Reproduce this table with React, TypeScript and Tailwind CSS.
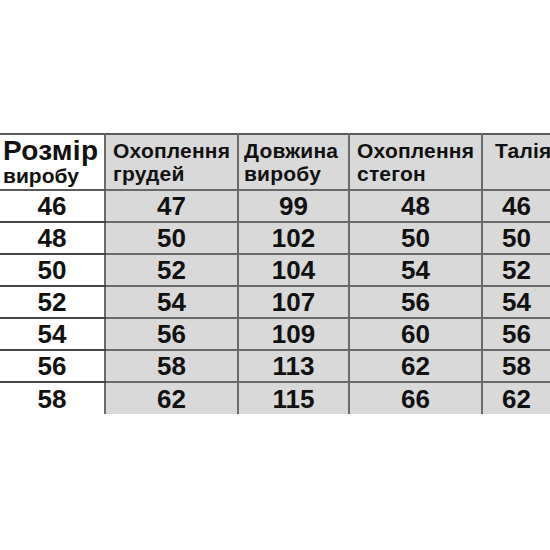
const head = [
  { a: "Охоплення", b: "грудей", pl: "pl-[7px]" },
  { a: "Довжина", b: "виробу", pl: "pl-[5px]" },
  { a: "Охоплення", b: "стегон", pl: "pl-[7px]" },
  { a: "Талія", b: "", pl: "pl-[12px]" },
]

const rows = [
  [46, 47, 99, 48, 46],
  [48, 50, 102, 50, 50],
  [50, 52, 104, 54, 52],
  [52, 54, 107, 56, 54],
  [54, 56, 109, 60, 56],
  [56, 58, 113, 62, 58],
  [58, 62, 115, 66, 62],
]

export default function App() {
  return (
    <div className="w-[550px] h-[550px] bg-white overflow-hidden font-['Liberation_Sans',Arial,sans-serif] text-[#111]">
      <div className="pt-[133px]">
        <table className="border-collapse table-fixed w-[550px]">
          <colgroup>
            <col className="w-[105px]" />
            <col className="w-[133px]" />
            <col className="w-[111px]" />
            <col className="w-[133px]" />
            <col className="w-[68px]" />
          </colgroup>
          <thead>
            <tr className="h-[56px] border-t-2 border-[#5a5a5a]">
              <th className="bg-white text-left align-top font-bold pl-[3px] pt-[2px] border-b-2 border-[#5a5a5a]">
                <div className="text-[28px] leading-[28px] tracking-[0.3px]">Розмір</div>
                <div className="text-[21px] leading-[22px]">виробу</div>
              </th>
              {head.map((h, i) => (
                <th
                  key={i}
                  className={`bg-[#d9d9d9] text-left align-top font-bold text-[21px] leading-[23px] tracking-[0.2px] pt-[4px] border-l-2 border-b-2 border-[#6a6a6a] ${h.pl}`}
                >
                  <div>{h.a}</div>
                  <div>{h.b}</div>
                </th>
              ))}
            </tr>
          </thead>
          <tbody>
            {rows.map((r, ri) => (
              <tr key={ri} className="h-[32px]">
                {r.map((v, ci) => (
                  <td
                    key={ci}
                    className={
                      ci === 0
                        ? `bg-white text-center font-bold text-[26px] leading-[30px] p-0 ${ri < rows.length - 1 ? "border-b-2 border-[#444]" : ""}`
                        : `bg-[#d9d9d9] text-center font-bold text-[26px] leading-[30px] p-0 border-l-2 border-[#6a6a6a] ${ri < rows.length - 1 ? "border-b-2" : ""}`
                    }
                  >
                    {v}
                  </td>
                ))}
              </tr>
            ))}
          </tbody>
        </table>
      </div>
    </div>
  )
}
